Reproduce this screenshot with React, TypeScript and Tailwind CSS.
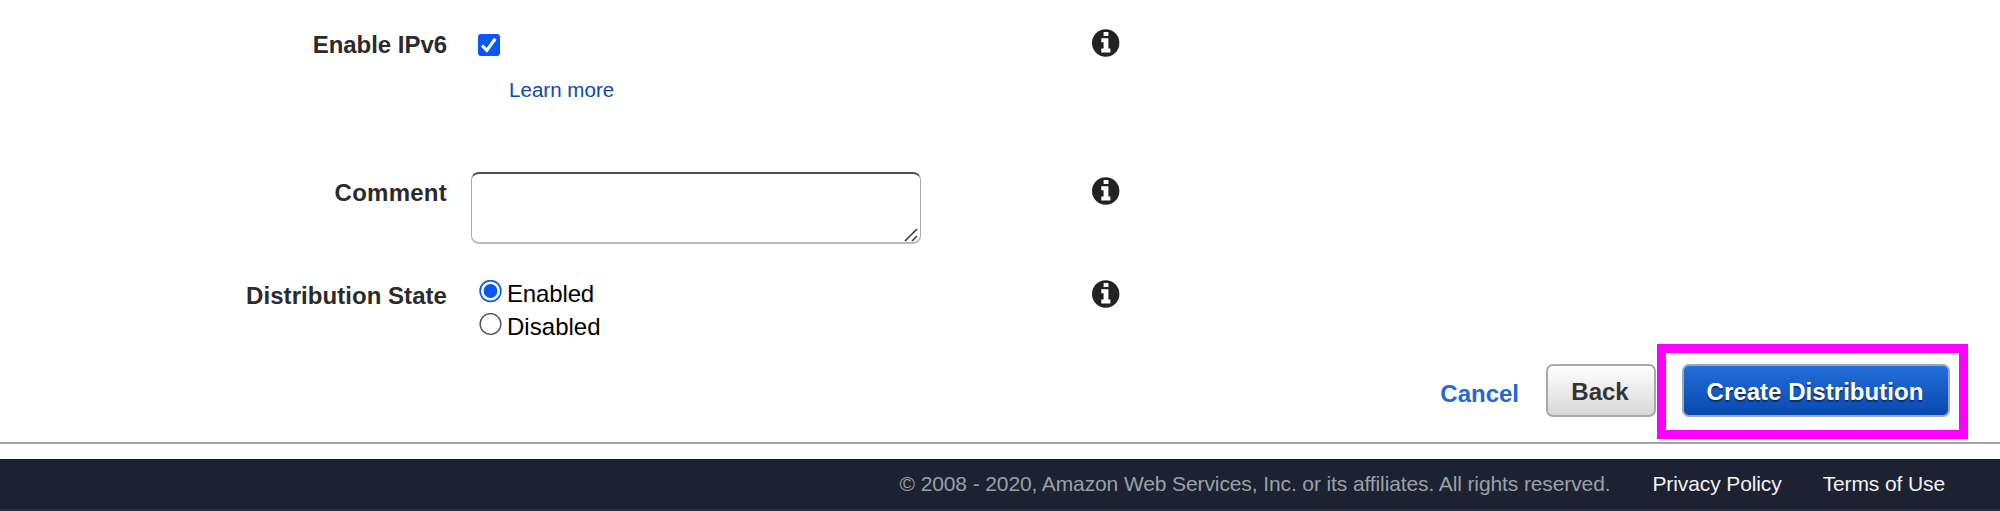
import React from "react";

function InfoIcon() {
  return (
    <svg className="block h-7 w-7 shrink-0" viewBox="0 0 28 28" aria-hidden="true">
      <circle cx="13.7" cy="14" r="13.7" fill="#222" />
      <path d="M11.6 2.9h4.8v4.1h-4.8zM9.3 9.3h7.1v10.3h2v4H9.3v-4h2.3v-6.3H9.3z" fill="#fff" />
    </svg>
  );
}

function FieldRow({
  label,
  className,
  labelClass,
  iconClass,
  children,
}: {
  label: string;
  className: string;
  labelClass: string;
  iconClass: string;
  children: React.ReactNode;
}) {
  return (
    <div className={`flex items-start ${className}`}>
      <div className={`w-[447px] shrink-0 text-right font-bold leading-7 text-[#2b2b2b] ${labelClass}`}>{label}</div>
      <div className="ml-6 w-[621px] shrink-0">{children}</div>
      <div className={iconClass}>
        <InfoIcon />
      </div>
    </div>
  );
}

function Radio({ label, checked, className }: { label: string; checked?: boolean; className: string }) {
  return (
    <label className="flex h-[33px] items-start pl-2">
      <svg className="block h-[23px] w-[23px]" viewBox="0 0 23 23" role="radio" aria-checked={!!checked}>
        <circle cx="11.5" cy="11" r="10.4" fill="#fff" stroke={checked ? "#0a57f5" : "#555"} strokeWidth={checked ? 1.6 : 1.4} />
        {checked && <circle cx="11.5" cy="11" r="6.9" fill="#0a57f5" />}
      </svg>
      <span className={`ml-[5px] leading-7 text-black ${className}`}>{label}</span>
    </label>
  );
}

export default function App() {
  return (
    <div className="flex h-[511px] w-[2000px] flex-col overflow-hidden bg-white font-['Liberation_Sans',Arial,sans-serif] text-[24px]">
      <main className="h-[344px] shrink-0 pt-[29px]">
        <FieldRow label="Enable IPv6" className="h-[143px] pt-[2px]" labelClass="tracking-[-0.04px]" iconClass="-mt-[2px]">
          <svg className="ml-[7px] mt-[3px] block h-[22px] w-[22px]" viewBox="0 0 22 22" role="checkbox" aria-checked="true">
            <rect width="22" height="22" rx="3" fill="#0a57f5" />
            <path d="M4 11.5L8.8 16.4L17.3 4.8" fill="none" stroke="#fff" strokeWidth="3.2" />
          </svg>
          <a className="ml-[38px] mt-[20px] block text-[20.5px] leading-7 tracking-[0.04px] text-[#0d49a8]">Learn more</a>
        </FieldRow>
        <FieldRow label="Comment" className="h-[108px]" labelClass="mt-[7px] tracking-[0.25px]" iconClass="mt-[5px]">
          <div className="relative h-[72px] w-[450px] rounded-[8px] border border-y-2 border-[#a9a9a9] border-b-[#b9b9b9] border-t-[#505050] bg-white">
            <svg className="absolute bottom-0 right-[2px] h-[14px] w-[14px]" viewBox="0 0 14 14" aria-hidden="true">
              <path d="M1 13L13 1M8 13L13 8" fill="none" stroke="#333" strokeWidth="1.5" />
            </svg>
          </div>
        </FieldRow>
        <FieldRow label="Distribution State" className="" labelClass="mt-[2px] tracking-[0.05px]" iconClass="">
          <Radio label="Enabled" checked className="tracking-[-0.15px]" />
          <Radio label="Disabled" className="tracking-[0.03px]" />
        </FieldRow>
      </main>

      <div className="flex h-[98px] shrink-0 items-start justify-end pr-8">
        <a className="mr-[27px] mt-[36px] font-bold leading-7 tracking-[0px] text-[#2467d2]">Cancel</a>
        <button className="mr-px mt-5 h-[53px] w-[110px] rounded-[7px] border-2 border-[#a9a9a9] bg-linear-to-b from-white to-[#d8d8d8] pl-[6px] pr-[8px] pt-[3px] font-bold text-[#333]">
          Back
        </button>
        <div className="h-[95px] w-[311px] border-[9px] border-[#ff00ff] p-[11px] pl-4">
          <button className="h-[53px] w-[268px] whitespace-nowrap rounded-[7px] border-2 border-[#9da9bb] bg-linear-to-b from-[#246ed9] to-[#0749ae] pl-[6px] pr-[8px] pt-[2px] font-bold tracking-[0.05px] text-white [text-shadow:0_2px_1px_#102e60]">
            Create Distribution
          </button>
        </div>
      </div>
      <div className="h-[2px] shrink-0 bg-[#a5a5a5]" />
      <footer className="mt-[15px] flex h-[52px] shrink-0 items-start justify-end border-b-2 border-[#2a2f42] bg-[#1c2231] pr-[55px] pt-[11px] text-[21px] leading-7 tracking-[-0.11px] text-[#f2f2f2]">
        <span className="mr-[42px] text-[#9ba0a8]">© 2008 - 2020, Amazon Web Services, Inc. or its affiliates. All rights reserved.</span>
        <a className="mr-[41px]">Privacy Policy</a>
        <a>Terms of Use</a>
      </footer>
    </div>
  );
}
